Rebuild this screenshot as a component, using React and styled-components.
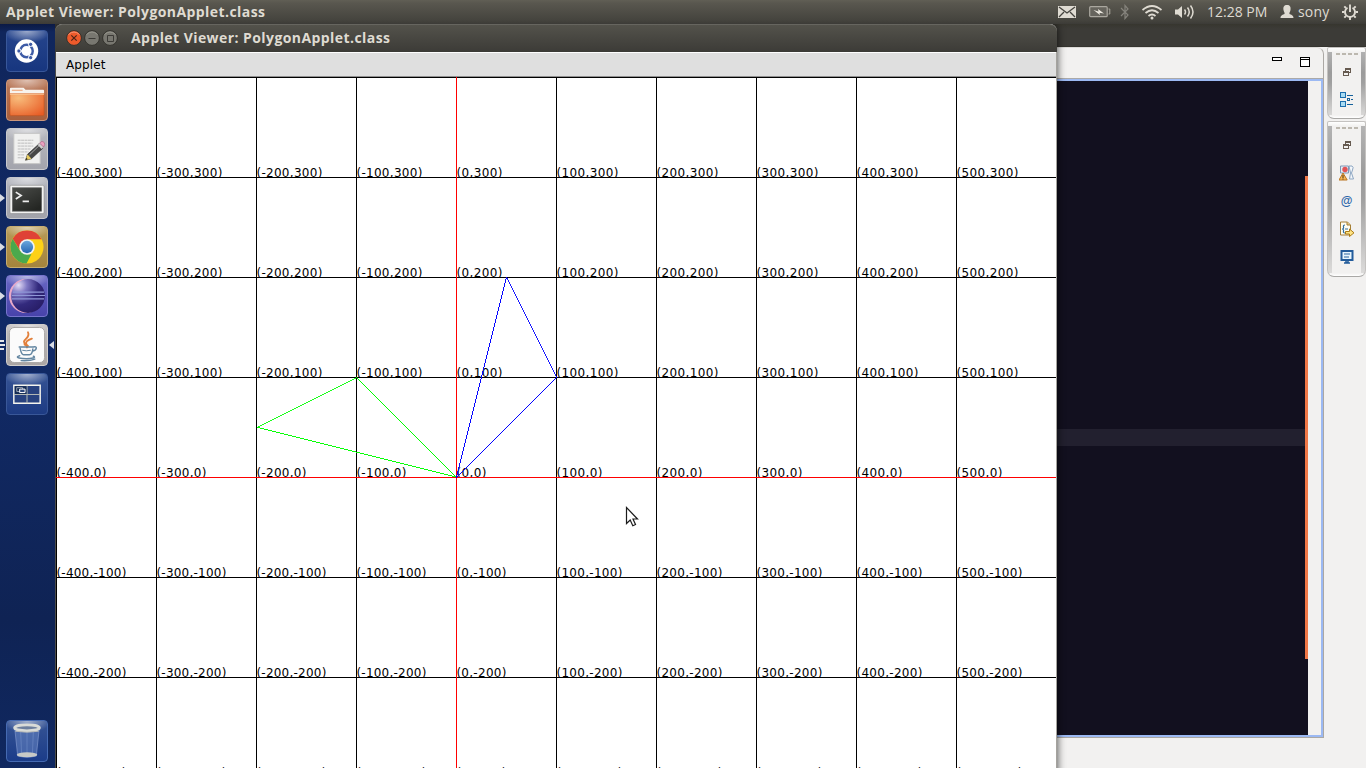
import React from "react";
import styled, { createGlobalStyle } from "styled-components";

const Global = createGlobalStyle`
  * { box-sizing: border-box; }
  body { margin: 0; overflow: hidden; background: #0f2459; }
  svg { display: block; flex: none; }
`;

const Screen = styled.div`
  width: 1366px;
  height: 768px;
  display: flex;
  flex-direction: column;
  overflow: hidden;
  font-family: "Open Sans", "Noto Sans", sans-serif;
`;

const TopPanel = styled.header`
  height: 24px;
  flex: none;
  display: flex;
  align-items: center;
  justify-content: space-between;
  padding: 0 8px 0 6px;
  background: linear-gradient(#615f55 0, #59574f 3px, #45443e 20px, #3c3b37 24px);
  color: #dfdbd2;
`;

const Title = styled.span`
  font-size: 14px;
  line-height: 20px;
  font-weight: 700;
  letter-spacing: 0.43px;
  white-space: nowrap;
  color: #dfdbd2;
`;

const Indicators = styled.div`
  display: flex;
  align-items: center;
  height: 24px;
`;

const Indicator = styled.div`
  width: ${(p) => p.$w}px;
  margin-left: ${(p) => p.$gap || 0}px;
  display: flex;
  align-items: center;
  font-size: 14px;
  line-height: 20px;
  letter-spacing: ${(p) => p.$spacing || 0}px;
  white-space: nowrap;
`;

const Desktop = styled.div`
  flex: 1;
  min-height: 0;
  display: flex;
`;

const Launcher = styled.nav`
  width: 55px;
  flex: none;
  display: flex;
  flex-direction: column;
  justify-content: space-between;
  padding: 6px 0 6px;
  background: linear-gradient(#0b1a44 0, #10265c 8px, #112a66 45%, #0f2354 80%, #102860 100%);
`;

const LauncherGroup = styled.div`
  display: flex;
  flex-direction: column;
  gap: 7px;
`;

const LauncherRow = styled.div`
  height: 42px;
  display: flex;
  align-items: center;
`;

const Marker = styled.div`
  width: 6px;
  flex: none;
`;

const Tile = styled.div`
  width: 42px;
  height: 42px;
  flex: none;
  border-radius: 4px;
  border: 1px solid ${(p) => p.$edge};
  background: radial-gradient(ellipse 24px 12px at 50% 0, rgba(255, 255, 255, 0.55), transparent),
    ${(p) => p.$fill};
`;

const Workspace = styled.main`
  position: relative;
  flex: 1;
  overflow: hidden;
  background: #3c3b37;
`;

const EditorWindow = styled.section`
  position: absolute;
  left: 945px;
  top: 0;
  width: 366px;
  height: 744px;
  display: flex;
  flex-direction: column;
  background: #f2f1f0;
`;

const EditorTitleBar = styled.div`
  height: 23px;
  flex: none;
  background: linear-gradient(#37362f 0, #3c3b37 5px);
  border-bottom: 1px solid #35342f;
`;

const EditorBody = styled.div`
  flex: 1;
  display: flex;
  align-items: flex-start;
  gap: 3px;
`;

const EditorFrame = styled.div`
  width: 324px;
  height: 691px;
  display: flex;
  flex-direction: column;
  border: 1px solid #aba8a4;
  border-top-color: #dcdad7;
  border-top-right-radius: 7px;
`;

const EditorTabs = styled.div`
  height: 31px;
  flex: none;
  display: flex;
  justify-content: flex-end;
  padding: 9px 12px 0 0;
  border-bottom: 1px solid #aaa9a8;
`;

const CodeFrame = styled.div`
  flex: 1;
  display: flex;
  border: 2px solid #9cb9f3;
  padding-right: 13px;
`;

const CodeArea = styled.div`
  flex: 1;
  display: flex;
  flex-direction: column;
  align-items: stretch;
  padding-top: 348px;
  background: #12101f;
`;

const CurrentLine = styled.div`
  height: 17px;
  background: #22202f;
`;

const ScrollTrack = styled.div`
  width: 3px;
  padding-top: 95px;
  background: #12101f;
`;

const ScrollThumb = styled.div`
  height: 483px;
  background: #f07746;
`;

const SideBars = styled.div`
  display: flex;
  flex-direction: column;
  gap: 2px;
`;

const SideBar = styled.div`
  width: 39px;
  height: ${(p) => p.$h}px;
  display: flex;
  flex-direction: column;
  align-items: center;
  border: 1px solid #c4c2c0;
  border-bottom-color: #a9a8a6;
  border-radius: 2px 2px 7px 7px;
  padding: 5px 4px 0;
  background:
    linear-gradient(#fff, #f2f1f0) top / 100% 4px no-repeat,
    linear-gradient(#f2f1f0, #fff) bottom / 100% 3px no-repeat,
    linear-gradient(90deg, transparent 4px, #f2f1f0 4px 33px, transparent 33px),
    linear-gradient(#b5b5b5 0, #9b9b9b 35%, #a0a0a0 50%, #dedddc 100%);
`;

const Dashes = styled.div`
  width: 22px;
  height: 2px;
  flex: none;
  background: repeating-linear-gradient(90deg, #bcb8af 0 4px, transparent 4px 6px);
`;

const SideIcon = styled.div`
  width: 16px;
  height: 16px;
  flex: none;
  margin-top: ${(p) => p.$mt}px;
  font: 700 12px/16px "Liberation Sans", sans-serif;
  color: #2b65a8;
  text-align: center;
`;

const AppletWindow = styled.section`
  position: absolute;
  left: 0;
  top: 0;
  width: 1002px;
  height: 760px;
  display: flex;
  flex-direction: column;
  border: 1px solid #a5a39e;
  border-left-color: #4b4b49;
  border-top: 0;
  border-radius: 7px 7px 0 0;
  background: #fff;
  box-shadow: 0 0 9px rgba(0, 0, 0, 0.75);
`;

const TitleBar = styled.div`
  height: 28px;
  flex: none;
  display: flex;
  align-items: center;
  padding: 0 0 1px 11px;
  margin: 0 -1px;
  border-top: 1px solid #66655f;
  border-radius: 7px 7px 0 0;
  background: linear-gradient(#53524b, #3c3b37);
`;

const WindowButtons = styled.div`
  display: flex;
  gap: 2px;
  margin-right: 13px;
`;

const MenuBar = styled.div`
  height: 25px;
  flex: none;
  padding-left: 10px;
  border-top: 1px solid #fff;
  border-bottom: 1px solid #8f8f8f;
  background: #dfdfdf;
  color: #000;
  font: 12px/25px "DejaVu Sans", sans-serif;
  letter-spacing: 0.1px;
`;

const AxisLabel = styled.text`
  font-family: "DejaVu Sans", sans-serif;
  font-size: 12px;
  fill: #000;
`;

const Pointer = styled.svg`
  position: absolute;
  left: 570px;
  top: 482px;
`;

const appletTitle = "Applet Viewer: PolygonApplet.class";
const columns = [-400, -300, -200, -100, 0, 100, 200, 300, 400, 500];
const rows = [300, 200, 100, 0, -100, -200, -300];

function Plot() {
  return (
    <svg width="1000" height="691" viewBox="56 77 1000 691">
      <g shapeRendering="crispEdges" fill="#000">
        {columns.map((c) => (
          <rect key={c} x={c + 456} y="77" width="1" height="691" />
        ))}
        <rect x="56" y="77" width="1000" height="1" />
        {rows.map((r) => (
          <rect key={r} x="56" y={477 - r} width="1000" height="1" />
        ))}
      </g>
      {rows.map((r) =>
        columns.map((c) => {
          const label = `(${c},${r})`;
          const width = [...label].reduce((n, ch) => n + (/\d/.test(ch) ? 8 : ch === "," || ch === "-" ? 4 : 5), 0);
          return (
            <AxisLabel key={label} x={c + 456.4} y={477 - r} textLength={width}>
              {label}
            </AxisLabel>
          );
        })
      )}
      <g shapeRendering="crispEdges" fill="none">
        <rect x="56" y="477" width="1000" height="1" fill="#f00" />
        <rect x="456" y="77" width="1" height="691" fill="#f00" />
        <path d="M456.5 477.4L256.5 427.4" stroke="#0f0" strokeWidth=".97" />
        <path d="M256.5 427.4L356.5 377.4" stroke="#0f0" strokeWidth=".89" />
        <path d="M356.5 377.5L456.5 477.5" stroke="#0f0" />
        <path d="M456.5 477.5L506.5 277.4" stroke="#00f" strokeWidth=".97" />
        <path d="M506.5 277.4L556.5 377.4" stroke="#00f" strokeWidth=".89" />
        <path d="M556.5 377.5L456.5 477.5" stroke="#00f" />
      </g>
    </svg>
  );
}

function WindowButton({ kind }) {
  const close = kind === "close";
  return (
    <svg width="16" height="16" viewBox="0 0 16 16">
      <circle cx="8" cy="8" r="7.4" fill={close ? "#ee5a2b" : "#787770"} stroke="#33322d" />
      <path d="M2.5 4.5Q8-.5 13.5 4.5" fill="none" stroke={close ? "#f79372" : "#96958c"} />
      {close && <path d="M5.3 5.3l5.4 5.4M10.7 5.3l-5.4 5.4" stroke="#4b2517" strokeWidth="1.2" />}
      {kind === "min" && <path d="M4.5 8.5h7" stroke="#3c3b37" />}
      {kind === "max" && <path d="M5.5 5.5h6v6h-6z" fill="none" stroke="#3c3b37" />}
    </svg>
  );
}

const RunArrow = () => (
  <svg width="6" height="10" viewBox="0 0 6 10"><path d="M0 1L5 5L0 9Z" fill="#d9dce4" /></svg>
);
const RunBars = () => (
  <svg width="6" height="12" viewBox="0 0 6 12"><path d="M0 2h4M0 6h5M0 10h4" stroke="#e5e7eb" strokeWidth="2" /></svg>
);

const art = {
  dash: (
    <g>
      <circle cx="20" cy="20.5" r="12" fill="#fff" />
      <circle cx="20" cy="20.5" r="6.4" fill="none" stroke="#3d5ba6" strokeWidth="2.5" />
      <path d="M9 20.5h7M25.5 11L22 17.500M25.500 30L22 23.500" stroke="#fff" strokeWidth="1.4" />
      <circle cx="12.2" cy="20.5" r="2.2" fill="#3d5ba6" stroke="#fff" />
      <circle cx="24.2" cy="13.7" r="2.2" fill="#3d5ba6" stroke="#fff" />
      <circle cx="24.2" cy="27.3" r="2.2" fill="#3d5ba6" stroke="#fff" />
    </g>
  ),
  files: (
    <g>
      <path d="M3 18V9q0-1 1-1h13l2 2h18q1 0 1 1v7z" fill="#f7f3ee" />
      <path d="M5 10.500h11" stroke="#ef9b6b" />
      <path d="M3 14h35v21q0 1.500-1.500 1.500h-32Q3 36.500 3 35z" fill="url(#folder)" stroke="#c65520" strokeWidth=".7" />
      <path d="M3 14.500h35" stroke="#ffd2a4" />
    </g>
  ),
  edit: (
    <g>
      <path d="M7 4.500h27v31H7z" fill="#f0f0ef" stroke="#c4c4c4" />
      <path d="M11 11.500h16M11 14.500h15M11 17.500h16M11 20.500h13M11 23.500h11M11 26.500h7M11 29.500h7" stroke="#bbb" strokeDasharray="3 .5" />
      <path d="M19 32l2-6L33 15l4 4.500L25 30.500z" fill="#474747" stroke="#222" strokeWidth=".6" />
      <path d="M23 26.500L33 17" stroke="#aaa" strokeWidth="1" />
      <path d="M19 32l2-6 4 4.500z" fill="#e7cc62" />
      <path d="M19 32l.8-2.500 1.500 1.500z" fill="#222" />
      <path d="M31.500 16.500l2-2 4 4-2 2z" fill="#cfcfcf" />
      <path d="M33.500 14.500l1.500-1.500q2-.7 3.200 1t-.7 4.500z" fill="#e9a1c0" stroke="#a85a7d" strokeWidth=".6" />
    </g>
  ),
  terminal: (
    <g>
      <rect x="3" y="7.500" width="35" height="29" rx="1.500" fill="#f2f2f1" stroke="#858585" strokeWidth=".6" />
      <rect x="5.500" y="10" width="30" height="24" fill="url(#term)" stroke="#666" strokeWidth=".7" />
      <path d="M9 14.500l5.500 3.500-5.500 3.500M16 24h6.500" fill="none" stroke="#eee" strokeWidth="1.700" />
    </g>
  ),
  chrome: (
    <g>
      <circle cx="20.500" cy="20.500" r="17" fill="#fdd117" />
      <path d="M5.800 12A17 17 0 0135.500 12.500H20.500L13.500 24z" fill="#df4236" />
      <path d="M5.800 12L13.500 24.500L20 28L25 28L20 37.500A17 17 0 015.800 12z" fill="#4aa94d" />
      <circle cx="20.500" cy="20.500" r="8" fill="#eef2f5" />
      <circle cx="20.500" cy="20.500" r="6.300" fill="url(#lens)" />
    </g>
  ),
  eclipse: (
    <g>
      <circle cx="19.500" cy="20.500" r="17.500" fill="#e9a9c8" />
      <circle cx="21.500" cy="20.500" r="17.300" fill="url(#eclipse)" />
      <path d="M6 16.500h32M5 20h34M5 23.500h33" stroke="#8f97d6" strokeWidth="1.200" />
    </g>
  ),
  java: (
    <g fill="none" strokeLinecap="round">
      <rect x="2.500" y="2.500" width="36" height="36" rx="5" fill="#fbfbfb" stroke="#a9a7a5" />
      <path d="M20 20.500c-8-5 5-6.500 1.500-13M21.500 21.500c-5-4 1-6.500 4-7.500M18 20c3 1 2 2 2.500 3" stroke="#e2803c" strokeWidth="1.900" />
      <path d="M12.500 22.500h14M13.500 24c1 5 2 6.500 3.500 6.500h6c2 0 3-2 3.500-6M27 22.500c4-1.500 4.500 3-1 4.500" stroke="#6386a1" strokeWidth="1.500" />
      <path d="M16 26q3.500 1 8 0" stroke="#6386a1" />
      <path d="M13 31.500c-7 2 3 3 7 3s11-1 7-2.500M14.500 36.500q9 .5 14-1.500" stroke="#6386a1" strokeWidth="1.500" />
    </g>
  ),
  switcher: (
    <g fill="none">
      <path d="M7 11.500h27v18.500H7z" fill="#28427f" stroke="#f5f5ee" strokeWidth="1.500" />
      <path d="M20.500 12v18M7 21h27" stroke="#b9bdb7" />
      <path d="M8 12.500h12v8H8z" fill="#142c54" />
      <path d="M10 14h6v4h-6z" stroke="#9ca5b4" />
      <path d="M13 15.500h5.500v3.500H13z" fill="#2d477b" stroke="#fff" />
    </g>
  ),
  trash: (
    <g>
      <path d="M8 8h25l-3 28q-9.500 3-19 0z" fill="#7e9bd8" fillOpacity=".4" stroke="#7f97cd" strokeWidth=".7" />
      <path d="M14 11l1 24M20.500 11v25M27 11l-1 24" stroke="#9cb2e4" strokeOpacity=".3" />
      <ellipse cx="20.500" cy="34.500" rx="10.500" ry="2.500" fill="#c8cac7" />
      <ellipse cx="20.500" cy="7" rx="12.700" ry="3" fill="#6d7f9e" stroke="#d9dbd7" strokeWidth="2.800" />
      <path d="M8.500 10.500q12 2 24 0" fill="none" stroke="#b8bab8" />
    </g>
  ),
};

function LauncherItem({ icon, fill, edge, mark, active }) {
  return (
    <LauncherRow>
      <Marker>{mark === "arrow" ? <RunArrow /> : mark === "bars" ? <RunBars /> : null}</Marker>
      <Tile $fill={fill} $edge={edge}>
        <svg width="40" height="40" viewBox="0 0 41 41">{art[icon]}</svg>
      </Tile>
      {active && (
        <svg width="7" height="10" viewBox="0 0 7 10"><path d="M6 1L1 5L6 9Z" fill="#d9dce4" /></svg>
      )}
    </LauncherRow>
  );
}

const items = [
  { icon: "dash", fill: "linear-gradient(#26458d, #17367f)", edge: "#38579a" },
  { icon: "files", fill: "linear-gradient(#b9795a, #a95f3c)", edge: "#cc967a" },
  { icon: "edit", fill: "linear-gradient(#b9bac0, #a3a4ac)", edge: "#c8c9cd" },
  { icon: "terminal", fill: "linear-gradient(#b5b7bf, #a2a3aa)", edge: "#c5c6cc", mark: "arrow" },
  { icon: "chrome", fill: "linear-gradient(#b79b59, #a5843c)", edge: "#c6ac70", mark: "arrow" },
  { icon: "eclipse", fill: "linear-gradient(#6767c4, #4843ab)", edge: "#7674cc", mark: "arrow" },
  { icon: "java", fill: "linear-gradient(#c0bdbd, #aaa5a4)", edge: "#d0cdcb", mark: "bars", active: true },
  { icon: "switcher", fill: "linear-gradient(#365494, #1d3b83)", edge: "#395798" },
];

function Definitions() {
  return (
    <svg width="0" height="0" aria-hidden="true">
      <defs>
        <radialGradient id="folder" cx=".25" cy=".2" r="1"><stop stopColor="#f8bc7c" /><stop offset="1" stopColor="#e85b24" /></radialGradient>
        <linearGradient id="term" x2=".7" y2="1"><stop stopColor="#4b4d4a" /><stop offset="1" stopColor="#242623" /></linearGradient>
        <linearGradient id="lens" y2="1" x2="0"><stop stopColor="#69a6dc" /><stop offset="1" stopColor="#2868b4" /></linearGradient>
        <radialGradient id="eclipse" cx=".22" cy=".18" r=".9"><stop stopColor="#e3dcf5" /><stop offset=".28" stopColor="#8079c4" /><stop offset=".65" stopColor="#332a7d" /><stop offset="1" stopColor="#281e68" /></radialGradient>
      </defs>
    </svg>
  );
}

const RestoreIcon = () => (
  <svg width="16" height="16" viewBox="0 0 16 16" shapeRendering="crispEdges">
    <path d="M6.500 4.500h5v4h-5z" fill="none" stroke="#665a50" />
    <path d="M6 5h6" stroke="#665a50" strokeWidth="2" />
    <path d="M4.500 7.500h5v4h-5z" fill="#f2f1f0" stroke="#665a50" />
    <path d="M4 8h6" stroke="#665a50" strokeWidth="2" />
  </svg>
);

function SideTools() {
  return (
    <SideBars>
      <SideBar $h={72}>
        <Dashes />
        <SideIcon $mt={9}><RestoreIcon /></SideIcon>
        <SideIcon $mt={11}>
          <svg width="16" height="16" viewBox="0 0 16 16" shapeRendering="crispEdges">
            <path d="M1.500 1.500h5v5h-5zM1.500 10.500h5v5h-5z" fill="#a9dbf2" stroke="#1b6ead" />
            <path d="M8 4.500h6M8 13.500h6M12 8.500h2" stroke="#15619b" />
            <path d="M8.500 7.500h2v2h-2z" fill="none" stroke="#15619b" />
          </svg>
        </SideIcon>
      </SideBar>
      <SideBar $h={156}>
        <Dashes />
        <SideIcon $mt={8}><RestoreIcon /></SideIcon>
        <SideIcon $mt={12}>
          <svg width="16" height="16" viewBox="0 0 16 16">
            <path d="M1.500 1h8v7h-8z" fill="#e5edf5" stroke="#7e98b8" />
            <circle cx="6" cy="4.500" r="2.700" fill="#e15457" />
            <path d="M10 1h3q2 1 .5 4l-1 3 2 6h-4l1-6z" fill="#f4f7fa" stroke="#8da6c2" />
            <path d="M4 8l4.200 7H0z" fill="#f5b95b" stroke="#ba751e" />
            <path d="M4 10v3M4 13.500v1" stroke="#493012" />
          </svg>
        </SideIcon>
        <SideIcon $mt={12}>@</SideIcon>
        <SideIcon $mt={12}>
          <svg width="16" height="16" viewBox="0 0 16 16">
            <path d="M1.500 1h7l3 3v10h-10z" fill="#fffdf1" stroke="#a57f36" />
            <path d="M8 1v3h3" fill="#e9cf87" stroke="#a57f36" />
            <path d="M6 4q-2 0-1.500 2T3 8q2 0 1.500 2T6 12M6 8h3" fill="none" stroke="#2e6c9e" strokeWidth="1.200" />
            <path d="M6.500 10.500h4V8l4.500 3.800-4.500 3.700V13h-4z" fill="#ffe486" stroke="#ab7a13" />
          </svg>
        </SideIcon>
        <SideIcon $mt={12}>
          <svg width="16" height="16" viewBox="0 0 16 16">
            <path d="M2.500 2h11v9h-11z" fill="#e7f4fc" stroke="#235c9b" strokeWidth="2" />
            <path d="M5 5h6M5 8h5" stroke="#2c67a2" />
            <path d="M5 14h6M7 11.500v2h2v-2" fill="none" stroke="#235c9b" strokeWidth="1.500" />
          </svg>
        </SideIcon>
      </SideBar>
    </SideBars>
  );
}

function SystemIndicators() {
  return (
    <Indicators>
      <Indicator $w={18}>
        <svg width="18" height="14" viewBox="0 0 18 14">
          <rect x="0" y="1" width="18" height="12" fill="#dfdbd2" />
          <path d="M1 2l8 6 8-6M1 12l5-5M17 12l-5-5" fill="none" stroke="#45443f" strokeWidth="1.300" />
        </svg>
      </Indicator>
      <Indicator $w={22} $gap={13}>
        <svg width="22" height="14" viewBox="0 0 22 14">
          <rect x=".7" y="1.700" width="17.500" height="10" rx="1" fill="#66645d" stroke="#aaa79f" strokeWidth="1.200" />
          <path d="M19.500 4h1.300v5h-1.300" fill="none" stroke="#aaa79f" />
          <path d="M4.500 5l5 1.500-.5-2.500L15 8.500l-4.500-.8.500 2.300z" fill="#eeeae2" />
        </svg>
      </Indicator>
      <Indicator $w={10} $gap={9}>
        <svg width="10" height="16" viewBox="0 0 10 16"><path d="M1 4l7 7-3 3.500V1.500L8 5l-7 7" fill="none" stroke="#85837c" strokeWidth="1.200" /></svg>
      </Indicator>
      <Indicator $w={22} $gap={11}>
        <svg width="22" height="16" viewBox="0 0 22 16">
          <path d="M1.500 6Q11-2 20.500 6M4.500 9Q11 3.500 17.500 9M7.500 12Q11 9 14.500 12" fill="none" stroke="#dfdbd2" strokeWidth="1.700" />
          <circle cx="11" cy="14" r="1.500" fill="#dfdbd2" />
        </svg>
      </Indicator>
      <Indicator $w={21} $gap={11}>
        <svg width="21" height="16" viewBox="0 0 21 16">
          <path d="M1 5.500h3L8 2v12l-4-3.500H1z" fill="#dfdbd2" />
          <path d="M10.500 5.500q2 2.500 0 5M13.500 3.500q3.500 4.500 0 9M16.500 1.500q5 6.500 0 13" fill="none" stroke="#dfdbd2" strokeWidth="1.500" />
        </svg>
      </Indicator>
      <Indicator $w={61} $gap={12}>12:28 PM</Indicator>
      <Indicator $w={14} $gap={12}>
        <svg width="14" height="14" viewBox="0 0 14 14"><path d="M7 0c3 0 4 2 3.500 5-.3 2-1.500 2.500-1 4 1.500.8 4 1 4 4H.5c0-3 2.500-3.200 4-4 .5-1.500-.7-2-1-4C3 2 4 0 7 0z" fill="#dfdbd2" /></svg>
      </Indicator>
      <Indicator $w={32} $gap={4} $spacing={0.2}>sony</Indicator>
      <Indicator $w={16} $gap={12}>
        <svg width="16" height="16" viewBox="0 0 16 16" fill="none" stroke="#dfdbd2">
          <path d="M5.500 3.700a5 5 0 105 0" strokeWidth="1.900" />
          <path d="M8 .5v7.500M0 8h2.500M13.500 8H16M8 13v3M2.300 2.300l1.700 1.700M13.700 2.300l-1.700 1.700M2.300 13.700l1.700-1.700M13.700 13.700l-1.700-1.700" strokeWidth="1.900" />
        </svg>
      </Indicator>
    </Indicators>
  );
}

export default function App() {
  return (
    <Screen>
      <Global />
      <TopPanel>
        <Title>{appletTitle}</Title>
        <SystemIndicators />
      </TopPanel>
      <Desktop>
        <Launcher>
          <LauncherGroup>
            {items.map((item) => <LauncherItem key={item.icon} {...item} />)}
          </LauncherGroup>
          <LauncherItem icon="trash" fill="linear-gradient(#365494, #1b3c89)" edge="#456ab2" />
        </Launcher>
        <Workspace>
          <EditorWindow>
            <EditorTitleBar />
            <EditorBody>
              <EditorFrame>
                <EditorTabs>
                  <svg width="40" height="14" viewBox="0 0 40 14" shapeRendering="crispEdges" fill="#fff" stroke="#000">
                    <path d="M1.500 .500h9v3h-9zM29.500 .500h9v9h-9zM29 2.500h10" />
                  </svg>
                </EditorTabs>
                <CodeFrame>
                  <CodeArea><CurrentLine /></CodeArea>
                  <ScrollTrack><ScrollThumb /></ScrollTrack>
                </CodeFrame>
              </EditorFrame>
              <SideTools />
            </EditorBody>
          </EditorWindow>
          <AppletWindow>
            <TitleBar>
              <WindowButtons>
                <WindowButton kind="close" /><WindowButton kind="min" /><WindowButton kind="max" />
              </WindowButtons>
              <Title>{appletTitle}</Title>
            </TitleBar>
            <MenuBar>Applet</MenuBar>
            <Plot />
          </AppletWindow>
          <Pointer width="14" height="22" viewBox="0 0 14 22">
            <path d="M1.500 1.500v16l3.700-3.500 2.600 5.700 2.700-1.200L8 13h4.500z" fill="#fff" stroke="#1b1b1b" strokeWidth="1.200" />
          </Pointer>
        </Workspace>
      </Desktop>
      <Definitions />
    </Screen>
  );
}
